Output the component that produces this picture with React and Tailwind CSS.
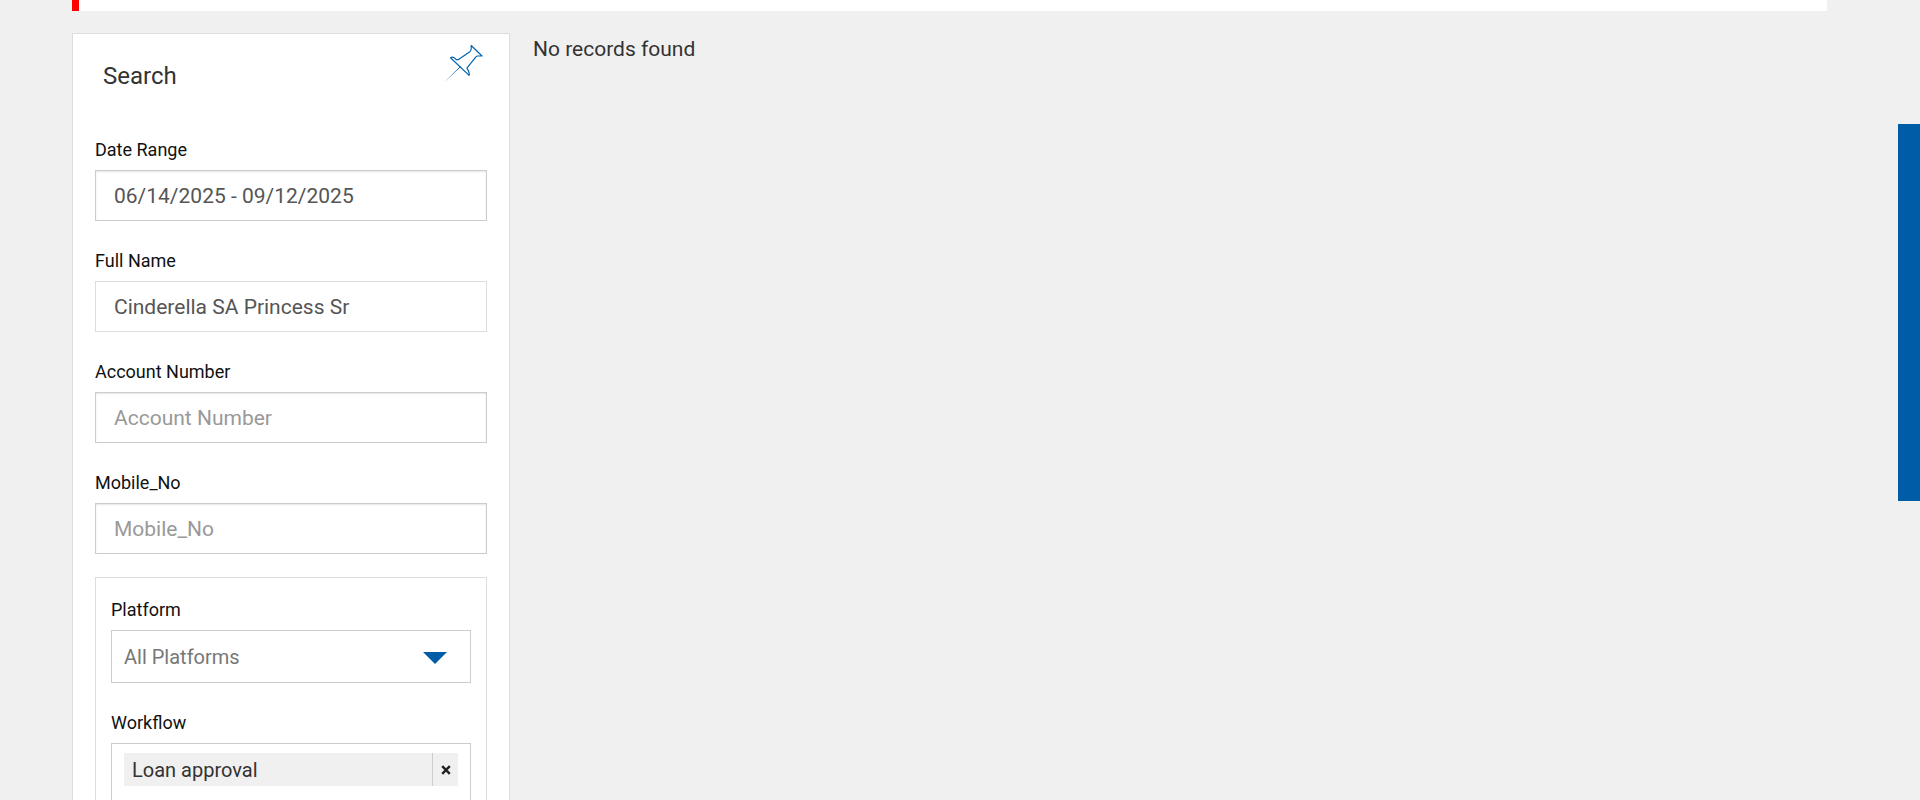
import React from "react";

const inputBase =
  "block h-[51px] w-full border bg-white px-[18px] text-[21px] text-[#555555] placeholder:text-[#999999] outline-none";

function Field({ id, label, readOnly, ...props }) {
  return (
    <div className="mb-[23px] flex flex-col">
      <label htmlFor={id} className="mb-2 pt-[5px] text-lg leading-6 text-[#111111]">
        {label}
      </label>
      <input
        id={id}
        type="text"
        readOnly={readOnly}
        className={
          inputBase +
          (readOnly
            ? " border-[#dddddd]"
            : " border-[#cccccc] shadow-[inset_0_1px_2px_rgba(0,0,0,0.1)]")
        }
        {...props}
      />
    </div>
  );
}

function PinIcon() {
  return (
    <svg viewBox="0 0 40 40" className="size-10" fill="none" aria-hidden="true">
      <defs>
        <linearGradient id="needle" x1="16" y1="24" x2="2" y2="38" gradientUnits="userSpaceOnUse">
          <stop offset="0" stopColor="#005ca6" />
          <stop offset="1" stopColor="#005ca6" stopOpacity="0.15" />
        </linearGradient>
      </defs>
      <path
        d="M27.2 2.500 38 13H33.8C32.8 13 32.2 13.4 31.7 14.2L22.9 25.2C24 27 26 29.600 25.100 32.400L6.500 14.800C8.500 13.700 10.500 14.200 12.200 16.600H14.500L25.800 8.700C27 7.700 27.400 6.800 27.200 5.200Z"
        stroke="#0065ae"
        strokeWidth="1.2"
        strokeLinejoin="round"
      />
      <path d="M16 24 1.500 38.200" stroke="url(#needle)" strokeWidth="1" />
    </svg>
  );
}

export default function App() {
  return (
    <div className="relative h-screen overflow-hidden bg-[#f0f0f0] pl-[72px] pr-[93px] font-[Roboto,sans-serif] text-[#333333]">
      <div className="h-[11px] border-l-[7px] border-[#ff0000] bg-white" />

      <div className="mt-[22px] flex items-start gap-[23px]">
        <aside className="w-[438px] shrink-0 border border-[#dddddd] bg-white px-[22px] pb-8">
          <header className="flex h-[98px] items-start justify-between pl-2 pr-[3px] pt-[9px]">
            <h2 className="pt-[15px] text-2xl leading-9">Search</h2>
            <button type="button" aria-label="Pin search panel">
              <PinIcon />
            </button>
          </header>

          <form className="pt-px">
            <Field id="date-range" label="Date Range" defaultValue="06/14/2025 - 09/12/2025" />
            <Field id="full-name" label="Full Name" defaultValue="Cinderella SA Princess Sr" readOnly />
            <Field id="account-number" label="Account Number" placeholder="Account Number" />
            <Field id="mobile-no" label="Mobile_No" placeholder="Mobile_No" />

            <div className="border border-[#dddddd] px-[15px] pb-6 pt-5">
              <label htmlFor="platform" className="mb-2 block text-lg leading-6 text-[#111111]">
                Platform
              </label>
              <div className="relative">
                <select
                  id="platform"
                  defaultValue="all"
                  className="block h-[53px] w-full appearance-none border border-[#cccccc] bg-white px-3 text-xl text-[#777777] outline-none"
                >
                  <option value="all">All Platforms</option>
                </select>
                <svg
                  viewBox="0 0 24 12"
                  className="pointer-events-none absolute right-6 top-[22px] h-3 w-6"
                  fill="#005ca6"
                  aria-hidden="true"
                >
                  <path d="M0 0H24L12 12Z" />
                </svg>
              </div>

              <h3 className="mb-2 mt-7 text-lg leading-6 text-[#111111]">Workflow</h3>
              <div className="h-[120px] border border-[#cccccc] px-3 py-[9px]">
                <div className="flex h-[33px] items-center bg-[#f0f0f0] text-xl">
                  <span className="flex-1 pl-2">Loan approval</span>
                  <button
                    type="button"
                    aria-label="Remove Loan approval"
                    className="flex h-full w-[26px] items-center justify-center border-l border-[#cccccc]"
                  >
                    <svg viewBox="0 0 10 10" className="size-[10px]" stroke="#222222" strokeWidth="2.400" aria-hidden="true">
                      <path d="M1.200 1.200 8.800 8.800M8.800 1.200 1.200 8.800" />
                    </svg>
                  </button>
                </div>
              </div>
            </div>
          </form>
        </aside>

        <main className="flex-1">
          <p className="text-[21px] leading-8">No records found</p>
        </main>
      </div>

      <button
        type="button"
        aria-label="Open side panel"
        className="absolute right-0 top-[124px] h-[377px] w-[22px] bg-[#005ca6]"
      />
    </div>
  );
}
